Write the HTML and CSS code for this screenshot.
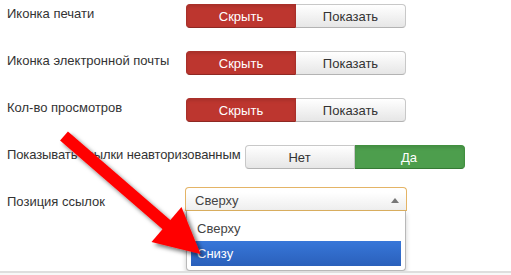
FILE: index.html
```html
<!DOCTYPE html>
<html>
	<head>
		<meta charset="UTF-8">
		<title>Параметры</title>
		<link rel="stylesheet" href="styles.css">
	</head>
	<body>

<div class="form">
    <!--иконка печати-->
    <div class="row">
        <label class="lb">Иконка печати</label>
        <div class="btn-group">
            <span class="btn btn-danger">Скрыть</span>
            <span class="btn">Показать</span>
        </div>
    </div>
    <!--иконка почты-->
    <div class="row">
        <label class="lb">Иконка электронной почты</label>
        <div class="btn-group">
            <span class="btn btn-danger">Скрыть</span>
            <span class="btn">Показать</span>
        </div>
    </div>
    <!--просмотры-->
    <div class="row">
        <label class="lb">Кол-во просмотров</label>
        <div class="btn-group">
            <span class="btn btn-danger">Скрыть</span>
            <span class="btn">Показать</span>
        </div>
    </div>
    <!--ссылки-->
    <div class="row row-short">
        <label class="lb lb-auto">Показывать ссылки неавторизованным</label>
        <div class="btn-group">
            <span class="btn">Нет</span>
            <span class="btn btn-success">Да</span>
        </div>
    </div>
    <!--позиция-->
    <div class="row row-select">
        <label class="lb">Позиция ссылок</label>
        <div class="chzn">
            <div class="chzn-single">
                <span>Сверху</span>
                <b></b>
            </div>
            <div class="chzn-drop">
                <ul>
                    <li>Сверху</li>
                    <li class="hl">Снизу</li>
                </ul>
            </div>
        </div>
    </div>
</div>

<div class="footer-line"></div>

<!--стрелка-->
<svg class="arrow" width="511" height="275" viewBox="0 0 511 275">
    <defs>
        <filter id="shadow" x="-20%" y="-20%" width="140%" height="140%">
            <feDropShadow dx="3" dy="3" stdDeviation="2" flood-color="#000" flood-opacity="0.55"/>
        </filter>
    </defs>
    <g filter="url(#shadow)" fill="#ff0000">
        <line x1="64" y1="136" x2="168" y2="226" stroke="#ff0000" stroke-width="12"/>
        <polygon points="151.5,242 181.5,207 200.5,254"/>
    </g>
</svg>

</body>
</html>
```

FILE: styles.css
```css
* {
    padding: 0;
    margin: 0;
    box-sizing: border-box;
}

body {
    background: #fff;
    font: 13px "Liberation Sans", Arial, sans-serif;
    color: #333;
    width: 511px;
    height: 275px;
    overflow: hidden;
    position: relative;
}

.form {
    padding: 4px 0 0 7px;
}

.row {
    display: flex;
    align-items: flex-start;
    margin-bottom: 23px;
}

.row-short {
    margin-bottom: 18px;
}

.lb {
    width: 179px;
    flex: none;
    line-height: 18px;
    padding-top: 1px;
    color: #333;
}

.lb-auto {
    width: auto;
    margin-right: 4px;
    letter-spacing: -0.1px;
}

.row-select .lb {
    padding-top: 6px;
}

.btn-group {
    display: flex;
}

.btn {
    display: block;
    width: 110px;
    height: 24px;
    line-height: 22px;
    padding-top: 1px;
    text-align: center;
    color: #333;
    background: linear-gradient(#ffffff, #e6e6e6);
    border: 1px solid #c8c8c8;
    border-bottom-color: #b3b3b3;
}

.btn:first-child {
    border-radius: 4px 0 0 4px;
}

.btn:last-child {
    border-radius: 0 4px 4px 0;
    border-left: 0;
}

.btn-danger {
    color: #fff;
    background: #bd362f;
    border-color: #a9302a;
    border-bottom-color: #8e2823;
    box-shadow: inset 0 2px 3px rgba(0, 0, 0, 0.1);
}

.btn-success {
    color: #fff;
    background: #4d9e4d;
    border-color: #41903f;
    border-bottom-color: #357a34;
    box-shadow: inset 0 2px 3px rgba(0, 0, 0, 0.1);
}

.chzn {
    position: relative;
    margin-left: -1px;
}

.chzn-single {
    width: 222px;
    height: 24px;
    padding: 5px 0 0 9px;
    line-height: 15px;
    color: #444;
    background: linear-gradient(#ffffff 20%, #eeeeee);
    border: 1px solid #e4b466;
    border-bottom-color: #dcb060;
    border-radius: 4px 4px 0 0;
}

.chzn-single b {
    position: absolute;
    right: 8px;
    top: 11px;
    width: 0;
    height: 0;
    border-left: 4px solid transparent;
    border-right: 4px solid transparent;
    border-bottom: 5px solid #777;
}

.chzn-drop {
    position: absolute;
    left: 1px;
    top: 24px;
    width: 220px;
    height: 60px;
    background: #fff;
    border: 1px solid #b8b8b8;
    border-top: 0;
    border-radius: 0 0 4px 4px;
    box-shadow: 0 3px 5px rgba(0, 0, 0, 0.2);
    padding: 5px 4px 4px 4px;
}

.chzn-drop ul {
    list-style: none;
}

.chzn-drop li {
    height: 25px;
    line-height: 15px;
    padding: 5px 6px;
    color: #444;
}

.chzn-drop li.hl {
    color: #fff;
    background: linear-gradient(#3877d9, #2a60bb);
}

.footer-line {
    position: absolute;
    left: 0;
    top: 271px;
    width: 511px;
    height: 4px;
    border-top: 2px solid #dedede;
    background: #f8f8f8;
}

.arrow {
    position: absolute;
    left: 0;
    top: 0;
    pointer-events: none;
}
```
